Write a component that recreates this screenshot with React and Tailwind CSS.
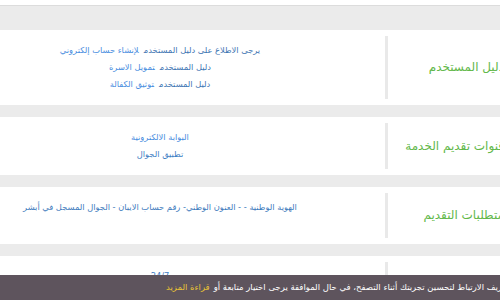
import React from "react";

const rows = [
  {
    label: "دليل المستخدم",
    lines: [
      [
        ["يرجى الاطلاع على دليل المستخدم", "text-[#3f76b3]"],
        ["لإنشاء حساب إلكتروني", "text-[#4a8ee0]"],
      ],
      [
        ["دليل المستخدم", "text-[#3f76b3]"],
        ["تمويل الاسرة", "text-[#4a8ee0]"],
      ],
      [
        ["دليل المستخدم", "text-[#3f76b3]"],
        ["توثيق الكفالة", "text-[#4a8ee0]"],
      ],
    ],
  },
  {
    label: "قنوات تقديم الخدمة",
    lines: [
      [["البوابة الالكترونية", "text-[#4a8ee0]"]],
      [["تطبيق الجوال", "text-[#3f80c4]"]],
    ],
  },
  {
    label: "متطلبات التقديم",
    lines: [
      [
        [
          "الهوية الوطنية - - العنون الوطني- رقم حساب الايبان - الجوال المسجل في أبشر",
          "text-[#3f7cbd]",
        ],
      ],
    ],
  },
  {
    label: "أوقات العمل",
    lines: [[["24/7", "text-[#3f80c4]"]]],
  },
];

function Row({ row }) {
  return (
    <div dir="rtl" className="flex items-stretch bg-white">
      <div className="w-[132px] shrink-0 flex items-center pr-[16px] py-[19px] min-h-[57px]">
        <span className="text-[12px] leading-[19px] text-[#62b84a] whitespace-nowrap">
          {row.label}
        </span>
      </div>
      <div className="w-[3px] shrink-0 my-[6px] bg-[#e9e9e9]" />
      <div className="flex-1 pr-[65px] py-3 flex flex-col items-center">
        {row.lines.map((parts, i) => (
          <div key={i} className="text-[8.3px] leading-[17px] whitespace-nowrap">
            {parts.map(([text, color], j) => (
              <span key={j} className={`${color} ${j > 0 ? "mr-[5px]" : ""}`}>
                {text}
              </span>
            ))}
          </div>
        ))}
      </div>
    </div>
  );
}

export default function App() {
  return (
    <div
      className="relative w-[500px] h-[300px] overflow-hidden bg-white"
      style={{ fontFamily: '"DejaVu Sans", sans-serif' }}
    >
      <div className="w-[520px]">
        <div className="h-[6px] bg-white border-b border-[#dcdcdc]" />
        <div className="h-[24px] bg-[#ebebeb]" />
        {rows.map((row, i) => (
          <div key={i}>
            {i > 0 && <div className="h-[12px] bg-[#ebebeb]" />}
            <Row row={row} />
          </div>
        ))}
      </div>
      <div className="absolute left-0 bottom-0 w-[500px] h-[25px] bg-[#5e545d] overflow-hidden">
        <div
          dir="rtl"
          className="absolute left-[166px] top-0 h-[25px] flex items-center text-[8.5px] text-white whitespace-nowrap"
        >
          نستخدم ملفات تعريف الارتباط لتحسين تجربتك أثناء التصفح، في حال الموافقة يرجى اختيار متابعة أو
          <span className="text-[#e8c236] mr-1">قراءة المزيد</span>
        </div>
      </div>
    </div>
  );
}
